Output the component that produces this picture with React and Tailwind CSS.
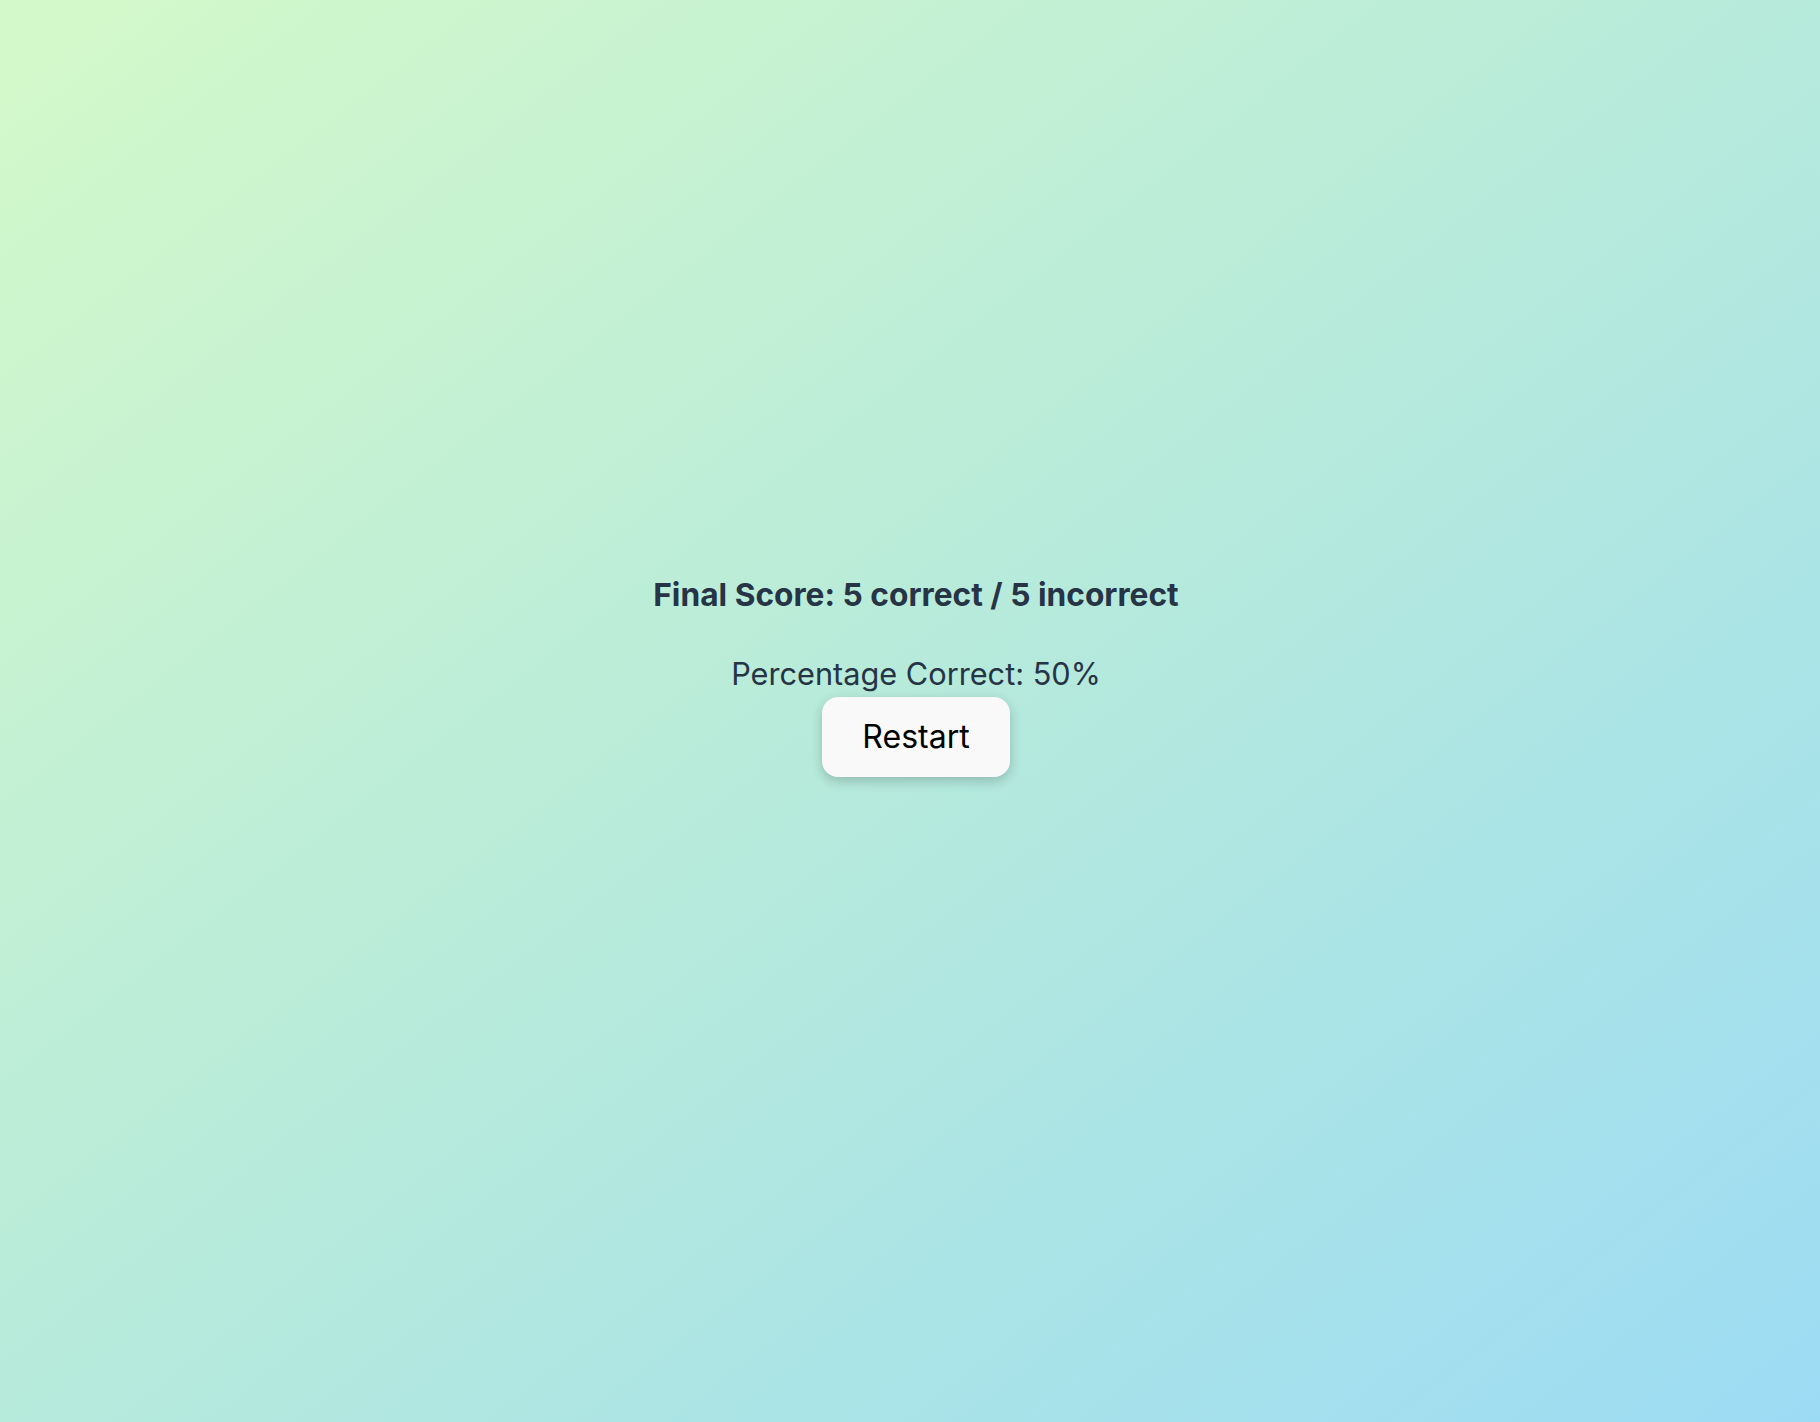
import React, { useState } from 'react';

export default function App() {
  const [correct] = useState(5);
  const [incorrect] = useState(5);
  const pct = Math.round((correct / (correct + incorrect)) * 100);

  return (
    <div className="min-h-screen w-full bg-gradient-to-br from-[#d4f9c9] via-[#b6eadb] to-[#9cdbf4] flex flex-col items-center justify-center pl-[12px] pb-[74px] font-['Inter',sans-serif]">
      {/* Results */}
      <h2 className="text-[31.7px] leading-[45px] font-bold text-[#263445]">
        Final Score: {correct} correct / {incorrect} incorrect
      </h2>
      <p className="mt-[34px] text-[30.7px] leading-[46px] text-[#263445]">
        Percentage Correct: {pct}%
      </p>
      <button
        type="button"
        className="w-[188px] h-[80px] rounded-2xl bg-[#f9f9f9] text-black text-[32px] shadow-[0_4px_12px_rgba(0,0,0,0.2)]"
      >
        Restart
      </button>
    </div>
  );
}
